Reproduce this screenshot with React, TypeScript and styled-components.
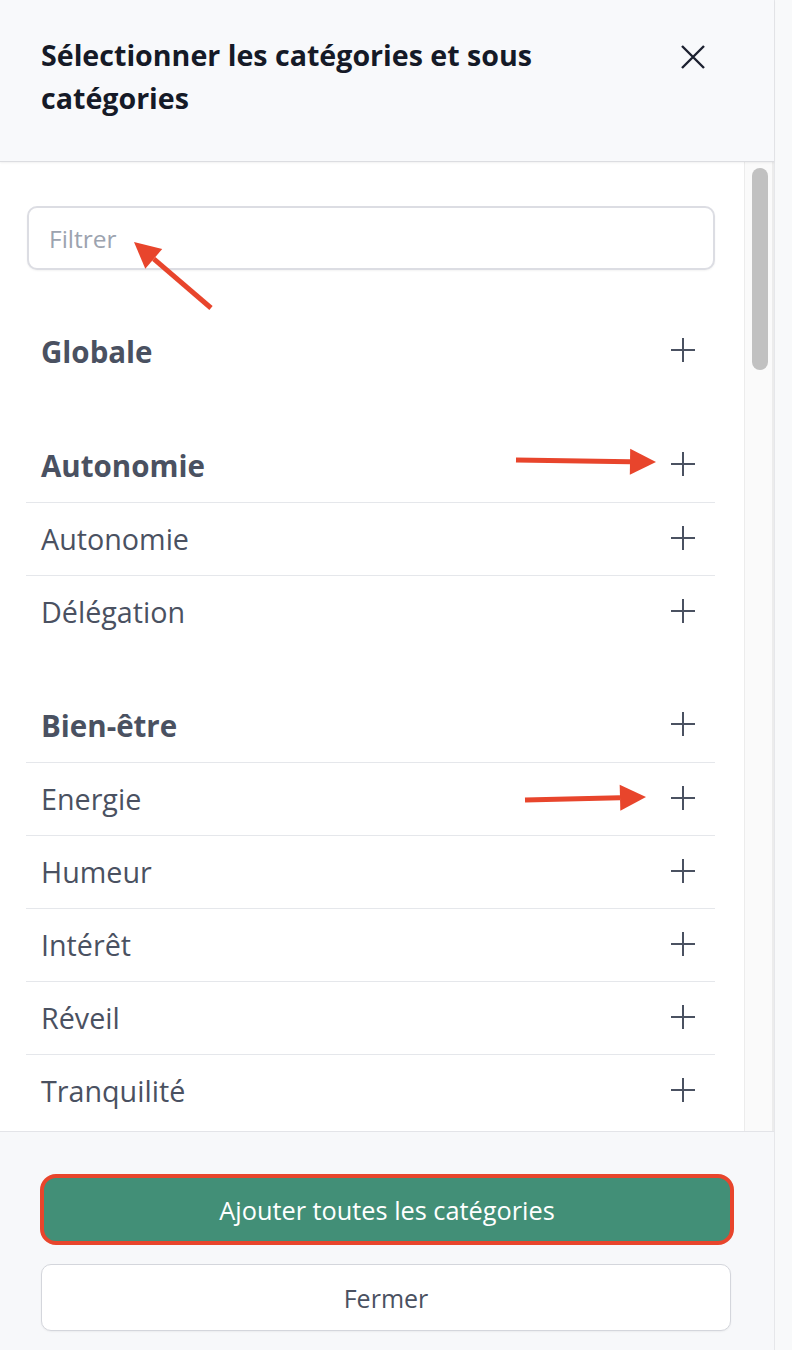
import React from "react";
import styled, { createGlobalStyle } from "styled-components";

const Global = createGlobalStyle`
  html, body { margin: 0; padding: 0; background: #f8f9fa; }
  body { font-family: "Open Sans", "Noto Sans", sans-serif; }
  * { box-sizing: border-box; }
`;

const Page = styled.div`
  width: 792px;
  height: 1350px;
  display: flex;
  background: #f8f9fa;
`;

const Panel = styled.div`
  width: 775px;
  height: 1350px;
  display: flex;
  flex-direction: column;
  border-right: 1px solid #e6e7ea;
  background: #ffffff;
  position: relative;
`;

const Header = styled.header`
  height: 162px;
  flex: none;
  background: #f8f9fb;
  border-bottom: 1px solid #dcdde1;
  box-shadow: 0 1px 2px rgba(0, 0, 0, 0.06);
  display: flex;
  align-items: flex-start;
  justify-content: space-between;
  padding: 33px 68px 0 41px;
  position: relative;
  z-index: 1;
`;

const Title = styled.h1`
  margin: 0;
  font-size: 28.6px;
  line-height: 43px;
  font-weight: 700;
  color: #151a27;
  max-width: 570px;
`;

const CloseButton = styled.button`
  border: none;
  background: transparent;
  padding: 0;
  margin-top: 11px;
  width: 26px;
  height: 26px;
  display: flex;
  align-items: center;
  justify-content: center;
  cursor: pointer;
`;

const Body = styled.div`
  flex: 1;
  display: flex;
  overflow: hidden;
  min-height: 0;
`;

const Content = styled.div`
  width: 744px;
  flex: none;
  padding: 44px 30px 0 26px;
`;

const Track = styled.div`
  width: 30px;
  flex: none;
  background: #fafafa;
  border-left: 1px solid #ececec;
  border-right: 2px solid #ececec;
  padding: 6px 5px 0 7px;
`;

const Thumb = styled.div`
  width: 16px;
  height: 202px;
  border-radius: 8px;
  background: #c1c1c1;
`;

const FilterInput = styled.input`
  display: block;
  width: 688px;
  height: 64px;
  margin: 0 0 45px 1px;
  border: 2px solid #dcdde3;
  border-radius: 10px;
  padding: 0 20px;
  font-family: "Open Sans", sans-serif;
  font-size: 24.5px;
  color: #374151;
  background: #fff;
  box-shadow: 0 1px 2px rgba(0, 0, 0, 0.05);
  outline: none;
  &::placeholder { color: #9ca3af; }
`;

const Group = styled.div`
  margin-bottom: 41px;
`;

const Row = styled.div<{ $divided?: boolean }>`
  height: 73px;
  display: flex;
  align-items: center;
  justify-content: space-between;
  padding: 0 18px 0 15px;
  border-top: ${(p) => (p.$divided ? "1px solid #e5e7eb" : "none")};
  width: 689px;
`;

const Label = styled.span<{ $bold?: boolean }>`
  font-size: ${(p) => (p.$bold ? 29.5 : 28.7)}px;
  font-weight: ${(p) => (p.$bold ? 700 : 400)};
  color: #4a5161;
  line-height: 1;
`;

const PlusButton = styled.button`
  border: none;
  background: transparent;
  padding: 0;
  width: 28px;
  height: 28px;
  margin-top: -3px;
  display: flex;
  align-items: center;
  justify-content: center;
`;

const Footer = styled.footer`
  height: 219px;
  flex: none;
  background: #f7f8fa;
  border-top: 1px solid #e3e4e8;
  padding: 42px 42px 0 40px;
  display: flex;
  flex-direction: column;
  gap: 19px;
`;

const PrimaryButton = styled.button`
  height: 71px;
  width: 694px;
  border: 4px solid #e8452c;
  border-radius: 16px;
  background: #428f77;
  color: #ffffff;
  font-family: "Open Sans", sans-serif;
  font-size: 25.3px;
  cursor: pointer;
`;

const SecondaryButton = styled.button`
  height: 67px;
  width: 690px;
  margin-left: 1px;
  border: 1px solid #d4d6dc;
  border-radius: 10px;
  background: #ffffff;
  color: #4a5161;
  font-family: "Open Sans", sans-serif;
  font-size: 25px;
  box-shadow: 0 1px 2px rgba(0, 0, 0, 0.05);
  cursor: pointer;
`;

const Annotation = styled.svg`
  position: absolute;
  left: 0;
  top: 0;
  pointer-events: none;
  overflow: visible;
`;

const Plus = () => (
  <svg width="26" height="26" viewBox="0 0 26 26">
    <path d="M13 1v24M1 13h24" stroke="#4a5161" strokeWidth="2" fill="none" />
  </svg>
);

type Item = { label: string; children?: string[] };

const groups: Item[] = [
  { label: "Globale" },
  { label: "Autonomie", children: ["Autonomie", "Délégation"] },
  {
    label: "Bien-être",
    children: ["Energie", "Humeur", "Intérêt", "Réveil", "Tranquilité"],
  },
];

const Arrow = ({ x1, y1, x2, y2 }: { x1: number; y1: number; x2: number; y2: number }) => {
  const ang = Math.atan2(y2 - y1, x2 - x1);
  const len = 26;
  const w = 13;
  const bx = x2 - Math.cos(ang) * len;
  const by = y2 - Math.sin(ang) * len;
  const px = -Math.sin(ang) * w;
  const py = Math.cos(ang) * w;
  return (
    <g>
      <line x1={x1} y1={y1} x2={bx} y2={by} stroke="#e8452c" strokeWidth="5" />
      <polygon
        points={`${x2},${y2} ${bx + px},${by + py} ${bx - px},${by - py}`}
        fill="#e8452c"
      />
    </g>
  );
};

export default function App() {
  return (
    <Page>
      <Global />
      <Panel>
        <Header>
          <Title>Sélectionner les catégories et sous catégories</Title>
          <CloseButton aria-label="Fermer">
            <svg width="26" height="26" viewBox="0 0 26 26">
              <path d="M2 2l22 22M24 2L2 24" stroke="#1c2130" strokeWidth="2.4" fill="none" />
            </svg>
          </CloseButton>
        </Header>
        <Body>
          <Content>
            <FilterInput placeholder="Filtrer" />
            {groups.map((g) => (
              <Group key={g.label}>
                <Row>
                  <Label $bold>{g.label}</Label>
                  <PlusButton><Plus /></PlusButton>
                </Row>
                {g.children?.map((c) => (
                  <Row $divided key={c}>
                    <Label>{c}</Label>
                    <PlusButton><Plus /></PlusButton>
                  </Row>
                ))}
              </Group>
            ))}
          </Content>
          <Track>
            <Thumb />
          </Track>
        </Body>
        <Footer>
          <PrimaryButton>Ajouter toutes les catégories</PrimaryButton>
          <SecondaryButton>Fermer</SecondaryButton>
        </Footer>
        <Annotation width="775" height="1350">
          <Arrow x1={211} y1={308} x2={134} y2={242} />
          <Arrow x1={516} y1={460} x2={656} y2={462} />
          <Arrow x1={525} y1={800} x2={646} y2={797} />
        </Annotation>
      </Panel>
    </Page>
  );
}
